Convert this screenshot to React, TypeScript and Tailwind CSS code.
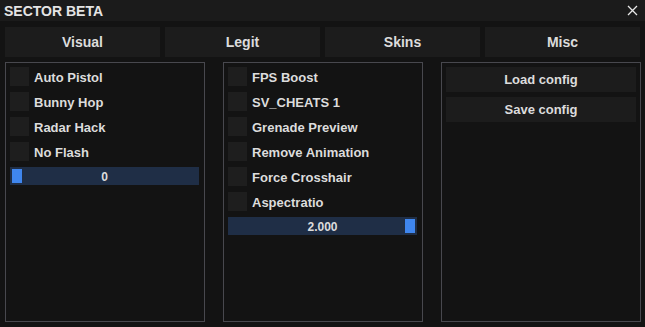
import React from "react";

const tabs = ["Visual", "Legit", "Skins", "Misc"];

function Checkbox({ label }: { label: string }) {
  return (
    <div className="flex items-center gap-[5px] h-[19px]">
      <div className="w-[19px] h-[19px] bg-[#1e1e1e] shrink-0" />
      <span className="text-[13px] font-bold text-[#dcdcdc] leading-none mt-[2px]">{label}</span>
    </div>
  );
}

function Slider({ value, pos }: { value: string; pos: "left" | "right" }) {
  return (
    <div className="relative w-[189px] h-[18px] bg-[#1f2e46] flex items-center justify-center">
      <div
        className={
          pos === "left"
            ? "absolute left-[2px] top-[2px] w-[10px] h-[14px] bg-[#3f86ee]"
            : "absolute right-[2px] top-[2px] w-[10px] h-[14px] bg-[#3f86ee]"
        }
      />
      <span className="text-[12px] font-bold text-[#dcdcdc] leading-none mt-[1px]">{value}</span>
    </div>
  );
}

export default function App() {
  return (
    <div
      className="w-[645px] h-[327px] bg-[#131313] flex flex-col overflow-hidden"
      style={{ fontFamily: '"Liberation Sans", Arial, sans-serif' }}
    >
      <div className="h-[21px] bg-[#1b1b1b] flex items-center justify-between pl-[4px] pr-[7px]">
        <span className="text-[14px] font-bold text-[#e4e4e4] leading-none">SECTOR BETA</span>
        <svg width="11" height="11" viewBox="0 0 11 11" className="mb-[1px]">
          <path d="M1 1L10 10M10 1L1 10" stroke="#e8e8e8" strokeWidth="1.3" />
        </svg>
      </div>

      <div className="flex gap-[5px] px-[5px] mt-[6px]">
        {tabs.map((t) => (
          <div
            key={t}
            className="w-[155px] h-[30px] bg-[#1c1c1c] flex items-center justify-center text-[14px] font-bold text-[#dcdcdc]"
          >
            {t}
          </div>
        ))}
      </div>

      <div className="flex gap-[18px] pl-[5px] mt-[5px]">
        <div className="w-[200px] h-[260px] border border-[#48484e] p-[4px] flex flex-col gap-[6px]">
          <Checkbox label="Auto Pistol" />
          <Checkbox label="Bunny Hop" />
          <Checkbox label="Radar Hack" />
          <Checkbox label="No Flash" />
          <Slider value="0" pos="left" />
        </div>

        <div className="w-[200px] h-[260px] border border-[#48484e] p-[4px] flex flex-col gap-[6px]">
          <Checkbox label="FPS Boost" />
          <Checkbox label="SV_CHEATS 1" />
          <Checkbox label="Grenade Preview" />
          <Checkbox label="Remove Animation" />
          <Checkbox label="Force Crosshair" />
          <Checkbox label="Aspectratio" />
          <Slider value="2.000" pos="right" />
        </div>

        <div className="w-[200px] h-[260px] border border-[#48484e] p-[4px] flex flex-col gap-[5px]">
          <div className="w-[190px] h-[25px] bg-[#1c1c1c] flex items-center justify-center text-[13px] font-bold text-[#dcdcdc]">
            Load config
          </div>
          <div className="w-[190px] h-[25px] bg-[#1c1c1c] flex items-center justify-center text-[13px] font-bold text-[#dcdcdc]">
            Save config
          </div>
        </div>
      </div>
    </div>
  );
}
